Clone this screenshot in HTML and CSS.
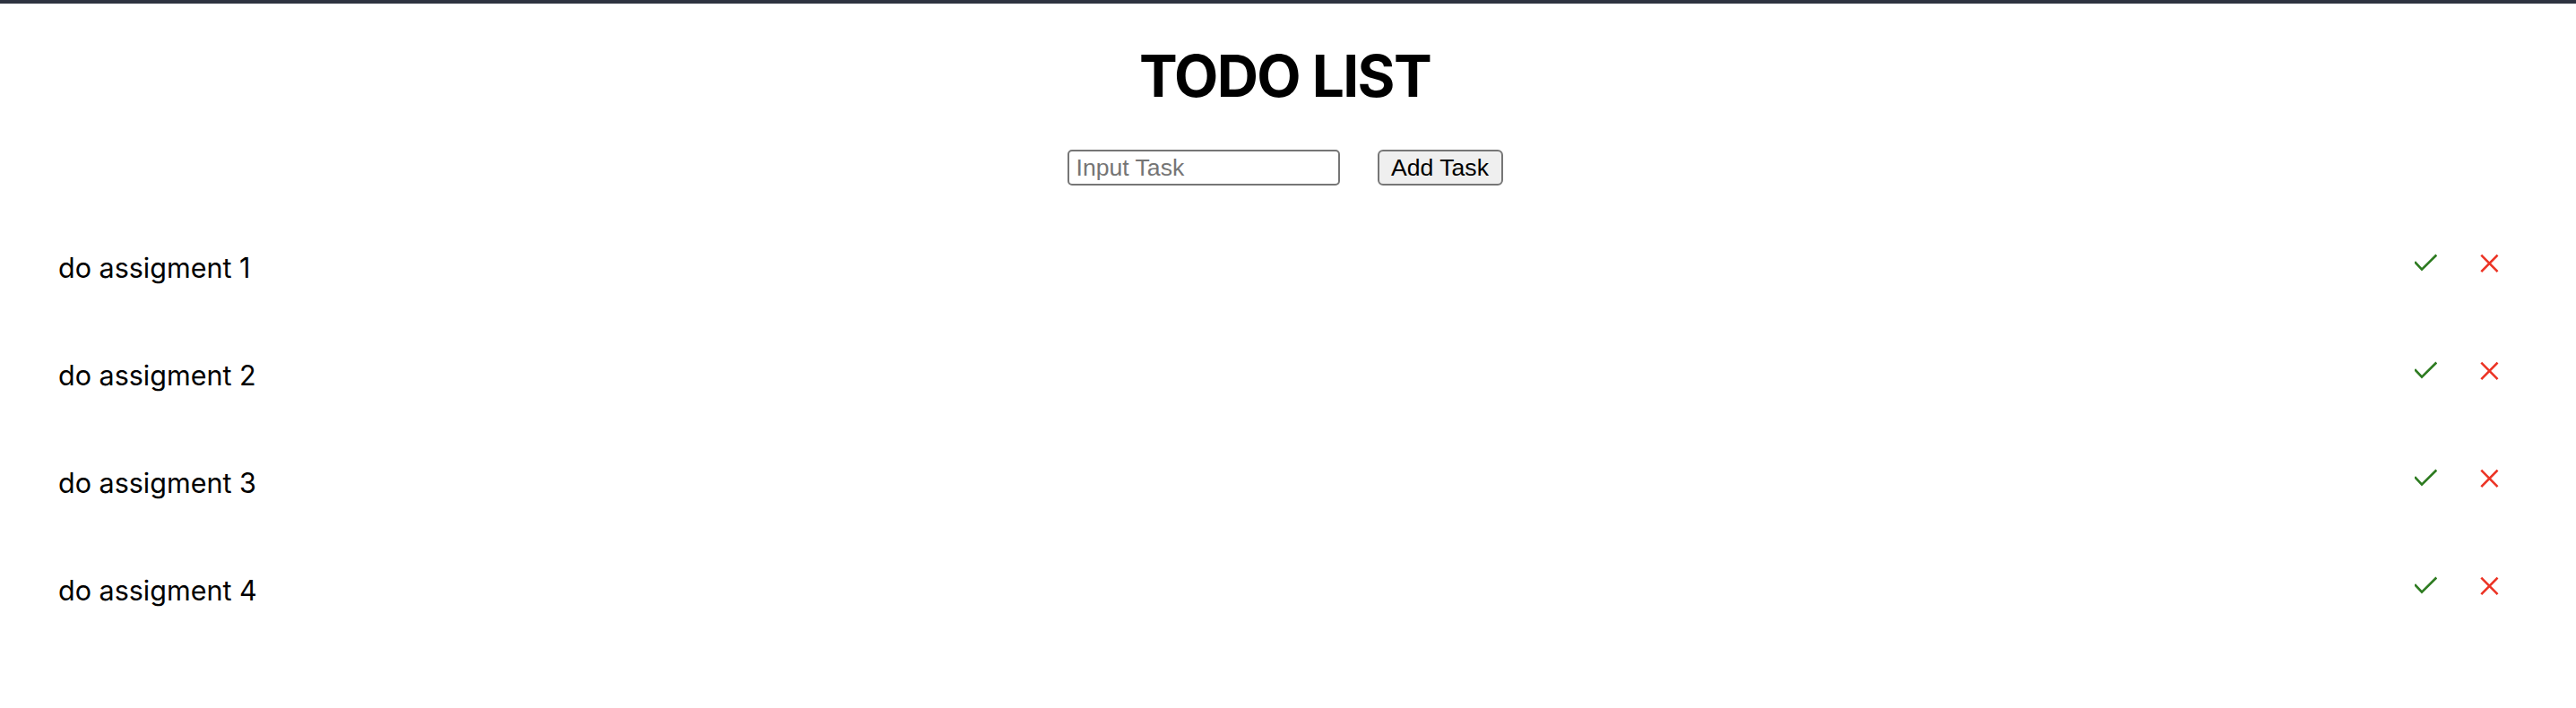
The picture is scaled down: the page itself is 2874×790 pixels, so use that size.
FILE: index.html
```html
<!DOCTYPE html>
<html lang="en">
<head>
<meta charset="utf-8">
<title>Todo List</title>
<link rel="stylesheet" href="styles.css">
</head>
<body>
<div class="topbar"></div>
<main class="app">
  <h1 class="title">TODO LIST</h1>
  <form class="add-form" onsubmit="return false;">
    <input class="task-input" type="text" placeholder="Input Task">
    <button class="add-btn" type="button">Add Task</button>
  </form>
  <ul class="task-list">
    <li class="task">
      <span class="task-text">do assigment 1</span>
      <div class="actions">
        <svg class="icon icon-check" width="25" height="24" viewBox="0 0 25 24"><path d="M1 11.2 L8 18.6 L23.4 3.4" fill="none" stroke="currentColor" stroke-width="2.6" stroke-linecap="square"/></svg>
        <svg class="icon icon-x" width="22" height="24" viewBox="0 0 22 24"><path d="M3.2 3.6 L19.6 20.2 M19.6 3.6 L3.2 20.2" fill="none" stroke="currentColor" stroke-width="2.6" stroke-linecap="square"/></svg>
      </div>
    </li>
    <li class="task">
      <span class="task-text">do assigment 2</span>
      <div class="actions">
        <svg class="icon icon-check" width="25" height="24" viewBox="0 0 25 24"><path d="M1 11.2 L8 18.6 L23.4 3.4" fill="none" stroke="currentColor" stroke-width="2.6" stroke-linecap="square"/></svg>
        <svg class="icon icon-x" width="22" height="24" viewBox="0 0 22 24"><path d="M3.2 3.6 L19.6 20.2 M19.6 3.6 L3.2 20.2" fill="none" stroke="currentColor" stroke-width="2.6" stroke-linecap="square"/></svg>
      </div>
    </li>
    <li class="task">
      <span class="task-text">do assigment 3</span>
      <div class="actions">
        <svg class="icon icon-check" width="25" height="24" viewBox="0 0 25 24"><path d="M1 11.2 L8 18.6 L23.4 3.4" fill="none" stroke="currentColor" stroke-width="2.6" stroke-linecap="square"/></svg>
        <svg class="icon icon-x" width="22" height="24" viewBox="0 0 22 24"><path d="M3.2 3.6 L19.6 20.2 M19.6 3.6 L3.2 20.2" fill="none" stroke="currentColor" stroke-width="2.6" stroke-linecap="square"/></svg>
      </div>
    </li>
    <li class="task">
      <span class="task-text">do assigment 4</span>
      <div class="actions">
        <svg class="icon icon-check" width="25" height="24" viewBox="0 0 25 24"><path d="M1 11.2 L8 18.6 L23.4 3.4" fill="none" stroke="currentColor" stroke-width="2.6" stroke-linecap="square"/></svg>
        <svg class="icon icon-x" width="22" height="24" viewBox="0 0 22 24"><path d="M3.2 3.6 L19.6 20.2 M19.6 3.6 L3.2 20.2" fill="none" stroke="currentColor" stroke-width="2.6" stroke-linecap="square"/></svg>
      </div>
    </li>
  </ul>
</main>
</body>
</html>
```
FILE: styles.css
```css
* { box-sizing: border-box; }

html, body {
  margin: 0;
  padding: 0;
  background: #ffffff;
}

body {
  font-family: Inter, "Liberation Sans", sans-serif;
  color: #000000;
}

.topbar {
  height: 4px;
  background: #2e3340;
}

.app {
  display: flex;
  flex-direction: column;
}

.title {
  margin: 42px 0 0;
  padding-right: 7px;
  font-family: Inter, "Liberation Sans", sans-serif;
  font-size: 64px;
  font-weight: 700;
  line-height: 77px;
  text-align: center;
  letter-spacing: -1.6px;
}

.add-form {
  margin: 44px 0 0;
  padding-right: 7px;
  display: flex;
  justify-content: center;
  gap: 42px;
}

.task-input {
  width: 304px;
  height: 40px;
  margin: 0;
  padding: 0 8px;
  border: 2px solid #767676;
  border-radius: 5px;
  font-family: "Liberation Sans", Arial, sans-serif;
  font-size: 26.6px;
  color: #000;
  background: #fff;
}

.task-input::placeholder {
  color: #757575;
}

.add-btn {
  width: 140px;
  height: 40px;
  margin: 0;
  padding: 0 10px;
  border: 2px solid #767676;
  border-radius: 6px;
  background: #efefef;
  font-family: "Liberation Sans", Arial, sans-serif;
  font-size: 26.6px;
  color: #000;
}

.task-list {
  list-style: none;
  margin: 72px 0 0;
  padding: 0 86px 0 65px;
  display: flex;
  flex-direction: column;
  gap: 80px;
}

.task {
  display: flex;
  justify-content: space-between;
  align-items: flex-start;
  height: 40px;
}

.task-text {
  font-size: 30.5px;
  line-height: 40px;
}

.actions {
  display: flex;
  gap: 47px;
  margin-top: 3px;
}

.icon { display: block; }

.icon-check { color: #2d7b20; }

.icon-x { color: #ec3324; }
```
